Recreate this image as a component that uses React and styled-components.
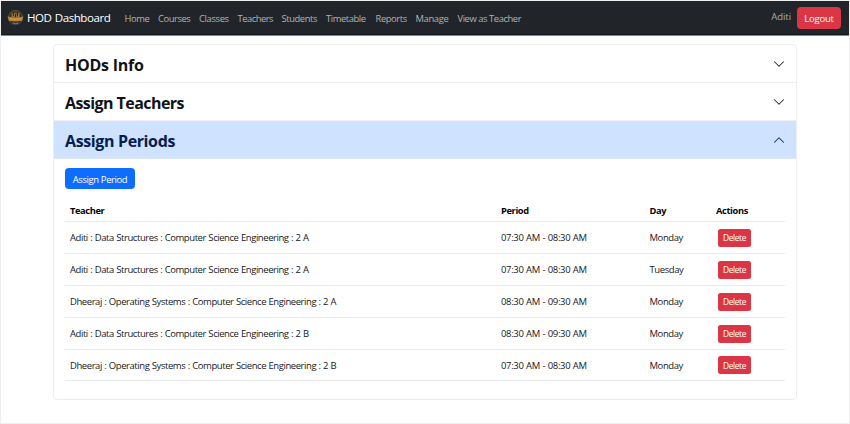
import React from "react";
import styled, { createGlobalStyle } from "styled-components";

const Global = createGlobalStyle`
  * { box-sizing: border-box; }
  body {
    margin: 0;
    background: #fff;
    color: #212529;
    font-family: "Segoe UI", "Open Sans", "Noto Sans", sans-serif;
    font-size: 9.5px;
  }
`;

const Page = styled.div`
  height: 424px;
  border: 1px solid #efefef;
  overflow: hidden;
`;

const Navbar = styled.nav`
  display: flex;
  align-items: center;
  height: 34px;
  padding: 0 8px 0 6px;
  background: #212529;
  box-shadow: 0 1px 0 #85888a;
  border-bottom: 1px solid #14171b;
`;

const Brand = styled.div`
  display: flex;
  align-items: center;
  gap: 3px;
  width: 117.5px;
  color: #fff;
  font-size: 11.6px;
  letter-spacing: -0.48px;
  word-spacing: 0.7px;
  white-space: nowrap;
`;

const NavLink = styled.a`
  width: ${(p) => p.$width}px;
  color: #b0b2b4;
  font-size: 9.4px;
  letter-spacing: ${(p) => p.$spacing}px;
  line-height: 14px;
  padding-top: 2px;
  white-space: nowrap;
`;

const UserName = styled.span`
  margin-left: auto;
  margin-right: 6px;
  padding-bottom: 2px;
  color: #a8aaac;
  font-size: 9.6px;
  letter-spacing: -0.1px;
`;

const Button = styled.button`
  display: flex;
  align-items: center;
  justify-content: center;
  width: ${(p) => p.$width}px;
  height: ${(p) => p.$height}px;
  padding: 1px 0 0;
  border: 0;
  border-radius: 4px;
  background: ${(p) => (p.$danger ? "#dc3545" : "#0d6efd")};
  color: #fff;
  font: inherit;
  font-size: 9.5px;
  letter-spacing: ${(p) => p.$spacing || 0}px;
  white-space: nowrap;
`;

const DeleteButton = styled(Button)`
  margin-left: 2px;
  padding: 0;
  border-radius: 2.5px;
  font-size: 8.4px;
`;

const Accordion = styled.main`
  width: 744px;
  height: 356px;
  margin: 9px 0 0 52px;
  border: 1px solid #ededee;
  border-radius: 4px;
`;

const AccordionHeader = styled.header`
  display: flex;
  align-items: center;
  justify-content: space-between;
  height: 38px;
  padding: 0 11px;
  border-bottom: 1px solid ${(p) => (p.$open ? "#dfe7f3" : "#ededee")};
  background: ${(p) => (p.$open ? "#cfe2ff" : "transparent")};
  color: ${(p) => (p.$open ? "#052c65" : "#212529")};
`;

const Heading = styled.h2`
  margin: 0;
  padding-top: 2px;
  color: ${(p) => (p.$open ? "#03204f" : "#111417")};
  font-size: 16px;
  font-weight: 700;
  letter-spacing: ${(p) => p.$spacing}px;
  line-height: 22px;
  white-space: nowrap;
`;

const Body = styled.section`
  padding: 9px 11px 0;
`;

const Table = styled.div`
  margin-top: 10px;
  color: #17191c;
`;

const Row = styled.div`
  display: grid;
  grid-template-columns: 431px 148.5px 66.5px 1fr;
  align-items: center;
  height: ${(p) => p.$height}px;
  padding-left: 5px;
  border-bottom: 1px solid #e9eaeb;
  white-space: nowrap;
`;

const HeadCell = styled.span`
  color: #050607;
  font-size: 9.3px;
  font-weight: 700;
  letter-spacing: -0.38px;
`;

const Cell = styled.span`
  font-size: 9.5px;
  letter-spacing: ${(p) => p.$spacing}px;
  word-spacing: 0.4px;
`;

function Chevron({ up }) {
  return (
    <svg width="12" height="12" viewBox="0 0 16 16" fill="none">
      <path
        d={up ? "M2 11 8 5l6 6" : "M2 5l6 6 6-6"}
        stroke="currentColor"
        strokeWidth="1.35"
        strokeLinecap="round"
        strokeLinejoin="round"
      />
    </svg>
  );
}

function Crest() {
  return (
    <svg width="17" height="17" viewBox="0 0 17 17" fill="none">
      <circle cx="8.5" cy="8.5" r="7" stroke="#69645a" strokeWidth=".8" />
      <path d="M3.5 4.2Q5 2 8.5 2t5 2.2v4.5h-10z" fill="#4c4030" />
      <path d="M4.7 4.2h7.6v4H4.7z" fill="#a77a3a" />
      <path d="M6.3 3.2v4M10.4 3.2v4M8.5 4.8v3.4" stroke="#222529" strokeWidth="1.1" />
      <path d="M.6 7.6q7.9 1.8 15.8 0l-1.3 4.1q-6.6 1.5-13.2 0z" fill="#b9823a" />
      <path d="M3 9.7q5.5 1 11 0" stroke="#d6a35b" strokeWidth=".8" />
      <path d="M3.6 12.4q4.9 1.2 9.8 0-1.7 3.2-4.9 3.4-3.2-.2-4.9-3.4z" fill="#353638" />
      <path d="M5.5 14q3 1.4 6 0" stroke="#9c8053" strokeWidth=".9" />
    </svg>
  );
}

const links = [
  ["Home", 33.5, -0.4],
  ["Courses", 41, -0.42],
  ["Classes", 38.5, -0.35],
  ["Teachers", 44, -0.5],
  ["Students", 44.5, -0.4],
  ["Timetable", 49.5, -0.42],
  ["Reports", 40, -0.4],
  ["Manage", 42, -0.35],
  ["View as Teacher", 70, -0.43],
];

const periods = [
  ["Aditi : Data Structures : Computer Science Engineering : 2 A", "07:30 AM - 08:30 AM", "Monday", 32],
  ["Aditi : Data Structures : Computer Science Engineering : 2 A", "07:30 AM - 08:30 AM", "Tuesday", 32],
  ["Dheeraj : Operating Systems : Computer Science Engineering : 2 A", "08:30 AM - 09:30 AM", "Monday", 32],
  ["Aditi : Data Structures : Computer Science Engineering : 2 B", "08:30 AM - 09:30 AM", "Monday", 32],
  ["Dheeraj : Operating Systems : Computer Science Engineering : 2 B", "07:30 AM - 08:30 AM", "Monday", 31],
];

export default function App() {
  return (
    <>
      <Global />
      <Page>
        <Navbar>
          <Brand>
            <Crest />
            HOD Dashboard
          </Brand>
          {links.map(([label, width, spacing]) => (
            <NavLink key={label} $width={width} $spacing={spacing}>{label}</NavLink>
          ))}
          <UserName>Aditi</UserName>
          <Button $danger $width={44} $height={22} $spacing={-0.2}>Logout</Button>
        </Navbar>
        <Accordion>
          <AccordionHeader>
            <Heading $spacing={-0.25}>HODs Info</Heading>
            <Chevron />
          </AccordionHeader>
          <AccordionHeader>
            <Heading $spacing={-0.56}>Assign Teachers</Heading>
            <Chevron />
          </AccordionHeader>
          <AccordionHeader $open>
            <Heading $open $spacing={-0.37}>Assign Periods</Heading>
            <Chevron up />
          </AccordionHeader>
          <Body>
            <Button $width={70} $height={21} $spacing={-0.4}>Assign Period</Button>
            <Table>
              <Row $height={23}>
                <HeadCell>Teacher</HeadCell>
                <HeadCell>Period</HeadCell>
                <HeadCell>Day</HeadCell>
                <HeadCell>Actions</HeadCell>
              </Row>
              {periods.map(([teacher, time, day, height]) => (
                <Row key={teacher + day} $height={height}>
                  <Cell $spacing={-0.435}>{teacher}</Cell>
                  <Cell $spacing={-0.34}>{time}</Cell>
                  <Cell $spacing={-0.42}>{day}</Cell>
                  <DeleteButton $danger $width={33} $height={18} $spacing={-0.4}>Delete</DeleteButton>
                </Row>
              ))}
            </Table>
          </Body>
        </Accordion>
      </Page>
    </>
  );
}
